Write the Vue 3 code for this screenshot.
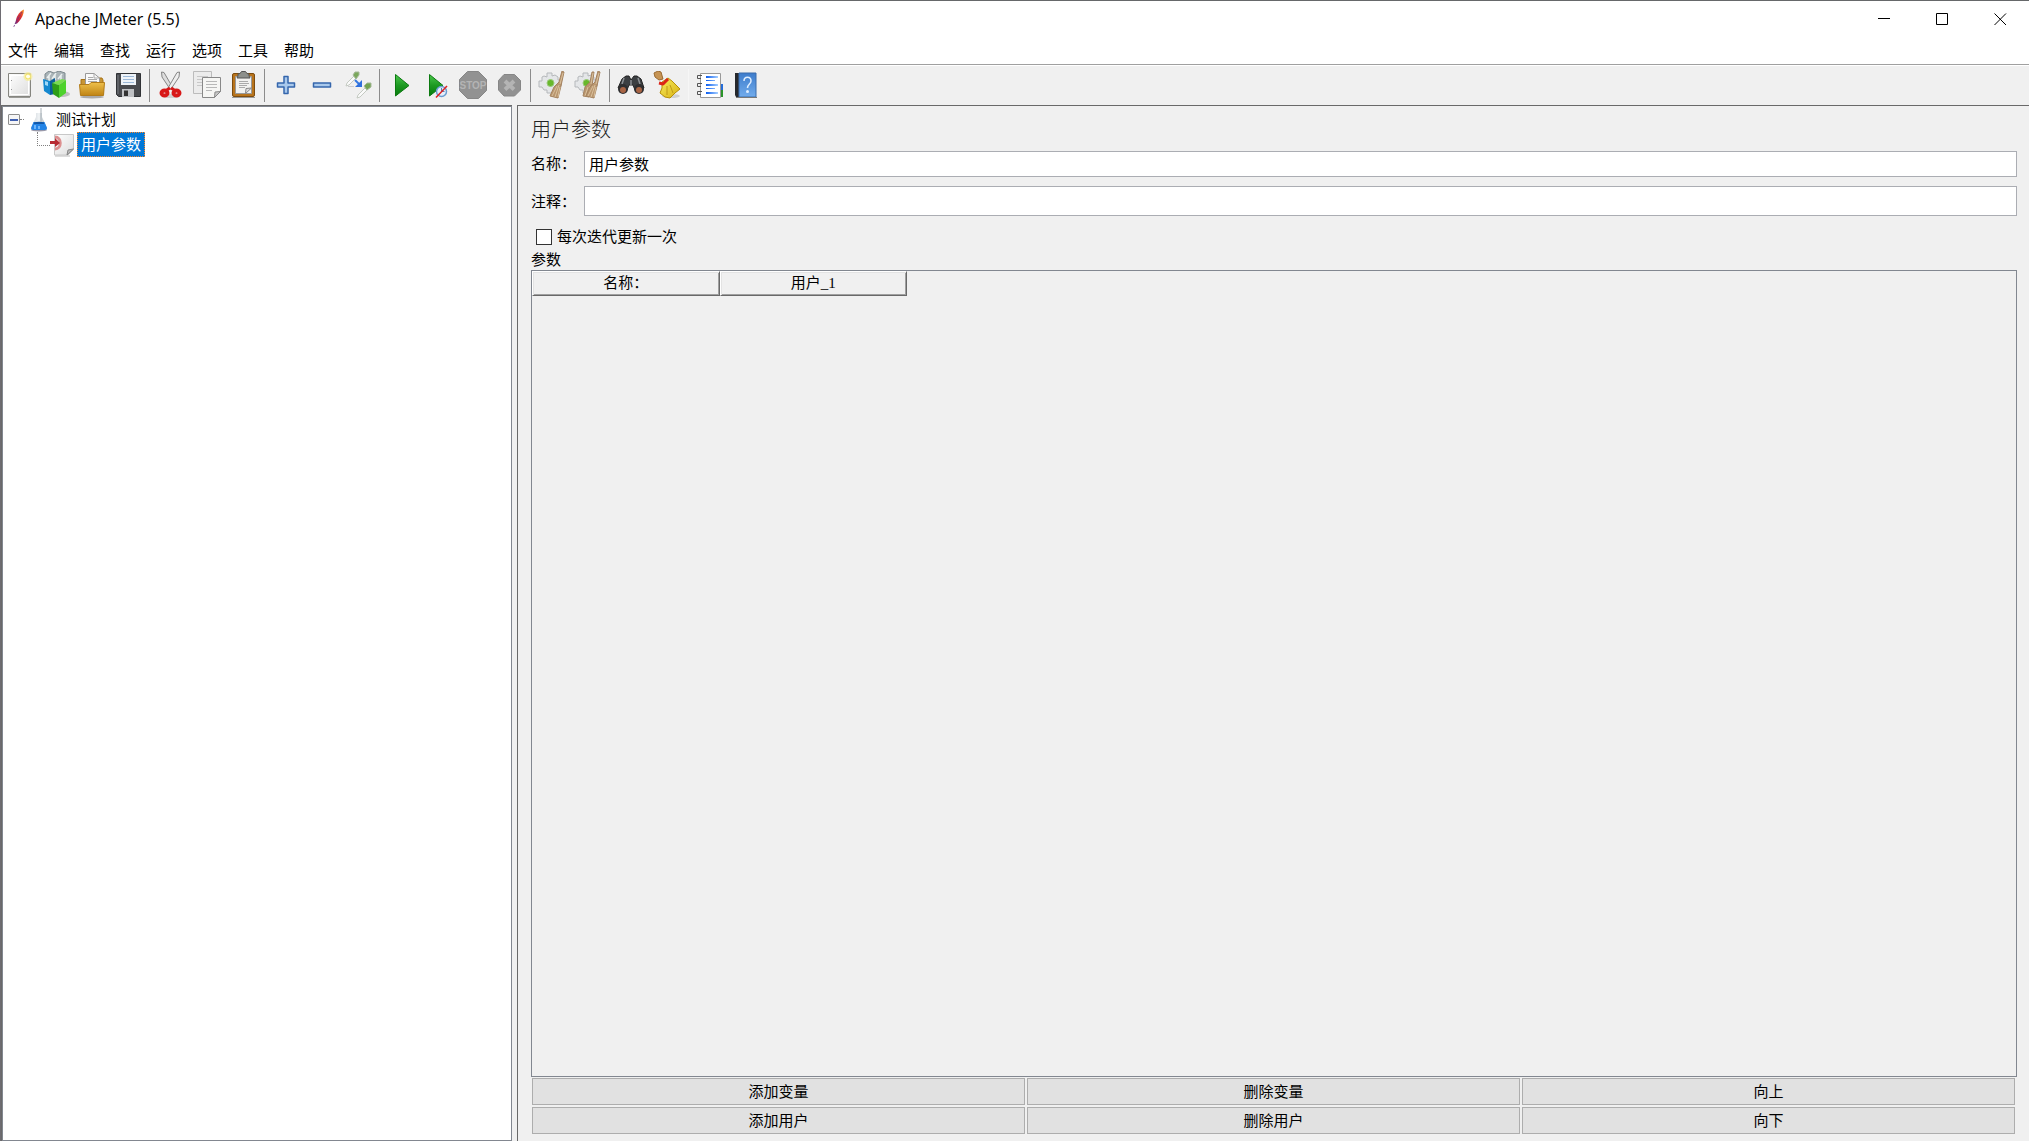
<script setup>
import { ref } from 'vue'

const menus = ['文件', '编辑', '查找', '运行', '选项', '工具', '帮助']

const toolGroups = [
  [
    { id: 'new', label: '新建' },
    { id: 'templates', label: '模板' },
    { id: 'open', label: '打开' },
    { id: 'save', label: '保存' },
  ],
  [
    { id: 'cut', label: '剪切' },
    { id: 'copy', label: '复制' },
    { id: 'paste', label: '粘贴' },
  ],
  [
    { id: 'expand', label: '展开' },
    { id: 'collapse', label: '折叠' },
    { id: 'toggle', label: '切换' },
  ],
  [
    { id: 'start', label: '启动' },
    { id: 'startNoTimers', label: '不停顿开始' },
    { id: 'stop', label: '停止' },
    { id: 'shutdown', label: '关闭' },
  ],
  [
    { id: 'clear', label: '清除' },
    { id: 'clearAll', label: '清除全部' },
  ],
  [
    { id: 'search', label: '查找' },
    { id: 'reset', label: '重置搜索' },
  ],
  [
    { id: 'functions', label: '函数助手' },
    { id: 'help', label: '帮助' },
  ],
]

const columns = ['名称：', '用户_1']
const actions = ['添加变量', '删除变量', '向上', '添加用户', '删除用户', '向下']

const name = ref('用户参数')
const comment = ref('')
const perIteration = ref(false)
</script>

<template>
  <div class="window">
    <svg class="defs" width="0" height="0" aria-hidden="true">
      <defs>
        <linearGradient id="gPaper" x1="0" y1="0" x2="1" y2="1">
          <stop offset="0" stop-color="#fff" /><stop offset="1" stop-color="#dcdcdc" />
        </linearGradient>
        <linearGradient id="gGold" x1="0" y1="0" x2="0" y2="1">
          <stop offset="0" stop-color="#eec04c" /><stop offset="1" stop-color="#c08414" />
        </linearGradient>
        <linearGradient id="gGreen" x1="0" y1="0" x2="0" y2="1">
          <stop offset="0" stop-color="#4cc84c" /><stop offset=".5" stop-color="#1d9a22" /><stop offset="1" stop-color="#067a0c" />
        </linearGradient>
        <linearGradient id="gBlue" x1="0" y1="0" x2="0" y2="1">
          <stop offset="0" stop-color="#3d7ccc" /><stop offset="1" stop-color="#72acec" />
        </linearGradient>
        <linearGradient id="gLine" x1="0" y1="0" x2="1" y2="0">
          <stop offset="0" stop-color="#0a5cf0" /><stop offset="1" stop-color="#a8d0ff" />
        </linearGradient>
        <linearGradient id="gFeather" x1="1" y1="0" x2="0" y2="1">
          <stop offset="0" stop-color="#f79a23" /><stop offset=".4" stop-color="#e0342c" /><stop offset=".75" stop-color="#b5214e" /><stop offset="1" stop-color="#5c2a80" />
        </linearGradient>
        <linearGradient id="gGlass" x1="0" y1="0" x2="1" y2="0">
          <stop offset="0" stop-color="#c4ccd2" /><stop offset=".5" stop-color="#f0f3f5" /><stop offset="1" stop-color="#9ba6ae" />
        </linearGradient>
        <linearGradient id="gBroom" x1="0" y1="0" x2="1" y2="1">
          <stop offset="0" stop-color="#f8ee60" /><stop offset="1" stop-color="#d8b010" />
        </linearGradient>
      </defs>
    </svg>

    <header class="titlebar">
      <svg width="12" height="20" viewBox="0 0 12 20" aria-hidden="true">
        <path d="M11 0.5C8 1.500 5 5 3.500 9L2 15L4 14.500C7 12 9.500 8 10.500 4Z" fill="url(#gFeather)" />
        <path d="M9 3L2.500 14L0.500 18.500" fill="none" stroke="#6b3080" stroke-width=".8" stroke-dasharray="2 1" />
      </svg>
      <h1 class="caption">Apache JMeter (5.5)</h1>
      <div class="winbuttons">
        <button type="button" aria-label="最小化"><svg width="13" height="13" viewBox="0 0 13 13"><path d="M0 5.500H12" /></svg></button>
        <button type="button" aria-label="最大化"><svg width="13" height="13" viewBox="0 0 13 13"><path d="M.5.5H11.500V11.500H.5Z" /></svg></button>
        <button type="button" aria-label="关闭"><svg width="13" height="13" viewBox="0 0 13 13"><path d="M.5.5L12 12M12 .5L.5 12" /></svg></button>
      </div>
    </header>

    <nav class="menubar">
      <button v-for="m in menus" :key="m" type="button">{{ m }}</button>
    </nav>

    <div class="toolbar" role="toolbar">
      <div v-for="(group, gi) in toolGroups" :key="gi" class="group">
        <button v-for="t in group" :key="t.id" type="button" :aria-label="t.label">
          <svg width="28" height="28" viewBox="0 0 28 28">
            <template v-if="t.id === 'new'">
              <path d="M2.500 2.500H24.500V25.500H2.500Z" fill="url(#gPaper)" stroke="#85857f" />
              <path d="M3 26.500H24" stroke="#9a9a96" />
              <path d="M4.500 4.500H22.500V23.500H4.500Z" fill="none" stroke="#fff" />
              <path d="M5 9.500h1M5 18.500h1" stroke="#999" />
              <circle cx="22" cy="5.500" r="4.500" fill="#f6ec9a" opacity=".75" />
              <circle cx="22" cy="5.500" r="2.500" fill="#fffde8" stroke="#f2e15c" />
            </template>
            <template v-else-if="t.id === 'templates'">
              <ellipse cx="20" cy="23" rx="8" ry="3" fill="#aaa" opacity=".7" />
              <path d="M3 3L7 0L12 2L17 0L23 2V14H3Z" fill="#aab4b8" stroke="#7d898e" />
              <path d="M5 7L9 2M10 8L14 2M16 8L20 3M7 10V5M13 9V4M19 9V5" stroke="#e9efef" stroke-width="1.500" />
              <path d="M1 8L8 10V24L2 20Z" fill="#1588cf" />
              <path d="M8 10L13 7V23L8 24Z" fill="#0b5f9c" />
              <path d="M3 10L6 11V15L3 14Z" fill="#9ed8f8" />
              <path d="M10 12L17 14V27L11 23Z" fill="#2e9d17" />
              <path d="M17 14L24 9V22L17 27Z" fill="#4ed22c" />
              <path d="M17 14L24 9L20 8L10 12Z" fill="#78dd50" />
            </template>
            <template v-else-if="t.id === 'open'">
              <ellipse cx="14" cy="26" rx="12" ry="1.500" fill="#aaa" />
              <path d="M3 8.500H10L12 7H24L25 9V23H3Z" fill="#c79535" stroke="#a87315" />
              <path d="M7.500 14V2.500H16L21.500 7V14Z" fill="#fafafa" stroke="#999" />
              <path d="M16 2.500V7H21" fill="none" stroke="#aaa" />
              <path d="M10 6.500h5M10 8.500h9M10 10.500h9" stroke="#aaa" />
              <path d="M1.500 13.500H11L13 11.500H26.500L25.500 24.500H2.500Z" fill="url(#gGold)" stroke="#b37c18" />
            </template>
            <template v-else-if="t.id === 'save'">
              <path d="M2.500 2.500H26.500V25.500H4.500L2.500 23.500Z" fill="#484a4e" stroke="#303236" />
              <path d="M7 3H22V14H7Z" fill="#eef3f8" />
              <path d="M9 5.500h11M9 8.500h11M9 11.500h11" stroke="#9bb8d8" />
              <path d="M8 18H20V26H8Z" fill="#bfc1c4" />
              <path d="M10 19.500H14V25H10Z" fill="#333" />
              <path d="M4 4v19" stroke="#777a80" />
            </template>
            <template v-else-if="t.id === 'cut'">
              <ellipse cx="14" cy="25" rx="9" ry="2" fill="#d0d0d0" />
              <path d="M4.500 1L7 1.500L16 17L13 18L5 6Z" fill="#ddd" stroke="#858585" />
              <path d="M22.500 1L20 1.500L11 17L14 18L22 6Z" fill="#eee" stroke="#858585" />
              <ellipse cx="7.500" cy="22" rx="3" ry="2.500" fill="none" stroke="#d81818" stroke-width="4" />
              <ellipse cx="19.500" cy="22" rx="3" ry="2.500" fill="none" stroke="#d81818" stroke-width="4" />
              <path d="M9 19.500L13 17M18 19.500L14 17" stroke="#d81818" stroke-width="3" />
            </template>
            <template v-else-if="t.id === 'copy'">
              <path d="M.5.5H18.500V22.500H.5Z" fill="#ececec" stroke="#bcbcbc" />
              <path d="M4 5.500h11M4 8.500h6M4 11.500h5M4 14.500h5" stroke="#c8c8c8" />
              <path d="M9.500 6.500H27.500V20.500L21.500 26.500H9.500Z" fill="#f6f6f4" stroke="#888" />
              <path d="M13 10.500h11M13 13.500h11M13 16.500h11M13 19.500h6" stroke="#b8b8b8" />
              <path d="M21.500 26.500L22 21L27.500 20.500Z" fill="#c8c8c8" stroke="#888" />
            </template>
            <template v-else-if="t.id === 'paste'">
              <path d="M3 26.500H26" stroke="#999" />
              <rect x="3.500" y="2.500" width="22" height="23" rx="1.500" fill="#b8741c" stroke="#7c4c10" />
              <path d="M6.500 5.500H22.500V22.500H6.500Z" fill="#f2f2f0" stroke="#999" />
              <path d="M9 5V3L11 2.500L12.500.5H16.500L18 2.500L20 3V5L21 7H8Z" fill="#8d908c" stroke="#555" />
              <path d="M10 10.500h9M10 12.500h10M10 14.500h8M10 16.500h6" stroke="#aaa" />
              <path d="M16.500 22.500L17 17.500L22.500 17Z" fill="#ddd" stroke="#888" />
            </template>
            <template v-else-if="t.id === 'expand'">
              <path d="M12 5.500H16V12H22.500V16H16V22.500H12V16H5.500V12H12Z" fill="#a9c9ec" stroke="#3566ac" stroke-width="1.500" />
            </template>
            <template v-else-if="t.id === 'collapse'">
              <path d="M5.500 12H22.500V16H5.500Z" fill="#a9c9ec" stroke="#3566ac" stroke-width="1.500" />
            </template>
            <template v-else-if="t.id === 'toggle'">
              <path d="M10 5L3 12L2 15L5 14L12 7Z" fill="#fafafa" stroke="#c4cac2" />
              <path d="M9 4L11 1L15 1V4L12 8Z" fill="#7aa85c" stroke="#a5b898" />
              <path d="M21 17L14 24L13 27L16 26L23 19Z" fill="#fafafa" stroke="#c4cac2" />
              <path d="M20 15L23 12L27 12V16L23 19Z" fill="#72a450" stroke="#a5b898" />
              <path d="M11 9L15 13" stroke="#3578e0" stroke-width="2" />
              <path d="M18 9V16H11Z" fill="#2f70dd" />
              <path d="M4 15.500H10" stroke="#ccc" />
            </template>
            <template v-else-if="t.id === 'start'">
              <path d="M8.500 3.500V25L22 14.500Z" fill="url(#gGreen)" stroke="#0b7a10" />
            </template>
            <template v-else-if="t.id === 'startNoTimers'">
              <path d="M6.500 3.500V25L20 14.500Z" fill="url(#gGreen)" stroke="#0b7a10" />
              <circle cx="18.500" cy="20.500" r="5" fill="#e4eefa" stroke="#6b9cd0" stroke-width="1.500" />
              <path d="M18.500 17v3.500h3" fill="none" stroke="#557fb0" />
              <path d="M13 26.500L24 15" stroke="#e02020" stroke-width="1.500" />
            </template>
            <template v-else-if="t.id === 'stop'">
              <path d="M8.500.5H19.500L27.500 8.500V19.500L19.500 27.500H8.500L.5 19.500V8.500Z" fill="#929292" stroke="#868686" />
              <text x="14" y="18" text-anchor="middle" class="stoptext">STOP</text>
            </template>
            <template v-else-if="t.id === 'shutdown'">
              <path d="M9 3.500H19.500L25.500 9.500V19L19.500 25H9L3.500 19V9.500Z" fill="#929292" stroke="#868686" />
              <path d="M10 10L19 18.500M19 10L10 18.500" stroke="#b4b4b4" stroke-width="4" />
            </template>
            <template v-else-if="t.id === 'clear' || t.id === 'clearAll'">
              <path d="M9 2H14V5L17 4L20 6V9H23V15H20V19L16 20L14 22H9V19H6L4 16H1V10H4V6L6 5L9 6Z" fill="#e4e6e8" stroke="#b5b8bb" />
              <circle cx="12.500" cy="12" r="3.500" fill="#68b82c" stroke="#9bc97c" />
              <path v-if="t.id === 'clearAll'" d="M18 1L16 11L11 16L9 25L15 26L18 15L20 1Z" fill="#b9966f" stroke="#a58360" />
              <path v-if="t.id === 'clearAll'" d="M14 16L11 25M16 15L14 25M19 2L17 13" stroke="#d9c09c" />
              <path d="M24 0L21 11L16 16L12 25L20 27L23 15L26 1Z" fill="#b9966f" stroke="#a58360" />
              <path d="M19 15L14 25M21 14L17 26M22 16L20 26M25 2L22 13" stroke="#d9c09c" />
            </template>
            <template v-else-if="t.id === 'search'">
              <path d="M5 8L9 5H12L14 9L17 5H20L24 8L27 17L18 19L16 14H12L10 19L1 17Z" fill="#3c3f42" stroke="#222" />
              <path d="M7 7L5 13M21 7L23 13M14 9v5" stroke="#8c9094" stroke-width="1.500" />
              <circle cx="6" cy="18" r="5" fill="#2e2e30" />
              <circle cx="22" cy="18" r="5" fill="#2e2e30" />
              <circle cx="6" cy="19" r="3" fill="#a86444" />
              <circle cx="22" cy="19" r="3" fill="#a86444" />
            </template>
            <template v-else-if="t.id === 'reset'">
              <ellipse cx="18" cy="25" rx="9" ry="2" fill="#cfcfcf" />
              <path d="M1 2L5 0L8 1L10 8L6 9L2 6Z" fill="#c69454" stroke="#9a6a30" />
              <path d="M9 11L15 7L19 10L27 18L22 22L17 27L12 26L7 22L9 17Z" fill="url(#gBroom)" stroke="#b79008" />
              <path d="M14 15L14 24M17 14L20 22" stroke="#c09a18" />
              <path d="M6 12L10 13L15 8" fill="none" stroke="#dc2418" stroke-width="3" />
            </template>
            <template v-else-if="t.id === 'functions'">
              <path d="M22 19H27V26H20Z" fill="#2a9428" />
              <path d="M22 13H27V19H22Z" fill="#246cd8" />
              <path d="M4.500 2.500H24.500V26.500H4.500Z" fill="#fff" stroke="#999" />
              <path d="M10 5H22V7H10ZM10 9H19V10H10ZM10 13H22V15H10ZM10 17H19V18H10ZM10 21H22V23H10Z" fill="url(#gLine)" />
              <path d="M6 4.500H1.500V7.500H5M6 12.500H1.500V15.500H5M6 20.500H1.500V23.500H5" fill="none" stroke="#555" />
            </template>
            <template v-else>
              <path d="M3 2H7V26H4L3 24Z" fill="#26282c" />
              <path d="M7 2H24V26H7Z" fill="url(#gBlue)" stroke="#3a6cac" />
              <path d="M4 26.500H25" stroke="#777" />
              <path d="M12 10C12 5 19 5 19 10C19 13 15.500 13 15.500 17" fill="none" stroke="#dfeeff" stroke-width="1.500" />
              <circle cx="15.500" cy="20.500" r="1.500" fill="#dfeeff" />
            </template>
          </svg>
        </button>
      </div>
    </div>

    <main class="split">
      <aside class="tree">
        <div class="row root">
          <button type="button" class="expander" aria-label="折叠节点"></button>
          <span class="stub"></span>
          <svg width="18" height="24" viewBox="0 0 18 24" aria-hidden="true">
            <ellipse cx="9" cy="22" rx="8" ry="1.500" fill="#99a" />
            <path d="M6 5H12V9L17 20Q17 22 15 22H3Q1 22 1 20L6 9Z" fill="url(#gGlass)" />
            <path d="M3.500 14H14.500L17 20Q17 22 15 22H3Q1 22 1 20Z" fill="#2484e6" />
            <path d="M4 14.500Q9 13 14 14.500L14 16H4Z" fill="#1258a8" />
            <path d="M5 17V21M9 18V21" stroke="#6cb4fa" stroke-width="2" />
            <path d="M11 0V14" stroke="#a4adb3" />
          </svg>
          <span class="node">测试计划</span>
        </div>
        <div class="row child">
          <span class="elbow"></span>
          <svg width="25" height="24" viewBox="0 0 25 24" aria-hidden="true">
            <path d="M5 23H20" stroke="#bbb" />
            <path d="M4.500 1.500H23.500V16.500L18 22H4.500Z" fill="url(#gPaper)" stroke="#c8c8c8" />
            <path d="M17 22L18 17L23.500 16Z" fill="#bbb" stroke="#888" />
            <path d="M5 4C12 4 12 16 5 16" fill="none" stroke="#dc9090" stroke-width="3" />
            <path d="M0 8H5V5L10 10L5 14V11H0Z" fill="#b82c34" />
          </svg>
          <span class="node selected">用户参数</span>
        </div>
      </aside>

      <section class="pane">
        <h2>用户参数</h2>
        <div class="field name">
          <label for="name">名称：</label>
          <input id="name" v-model="name" type="text" />
        </div>
        <div class="field comment">
          <label for="comment">注释：</label>
          <input id="comment" v-model="comment" type="text" />
        </div>
        <label class="check">
          <input v-model="perIteration" type="checkbox" />
          <span>每次迭代更新一次</span>
        </label>
        <div id="params" class="tabletitle">参数</div>
        <div class="scroll">
          <table aria-labelledby="params">
            <thead>
              <tr><th v-for="c in columns" :key="c" scope="col">{{ c }}</th></tr>
            </thead>
            <tbody></tbody>
          </table>
        </div>
        <div class="actions">
          <button v-for="a in actions" :key="a" type="button">{{ a }}</button>
        </div>
      </section>
    </main>
  </div>
</template>

<style>
body {
  margin: 0;
  background: #f0f0f0;
}
</style>

<style scoped>
* {
  box-sizing: border-box;
}
.window {
  display: flex;
  flex-direction: column;
  min-height: 100vh;
  border-top: 1px solid #66686a;
  border-left: 1px solid #6e6c72;
  background: #f0f0f0;
  color: #000;
  font-family: "Noto Sans CJK SC", sans-serif;
  font-size: 15px;
  line-height: 20px;
}
.defs {
  position: absolute;
}
button {
  margin: 0;
  padding: 0;
  border: 0;
  background: none;
  color: inherit;
  font: inherit;
}

.titlebar {
  display: flex;
  align-items: center;
  height: 36px;
  padding-left: 12px;
  background: #fff;
}
.caption {
  flex: 1;
  margin: 0 0 0 10px;
  font: 400 16px/20px "Open Sans", "Noto Sans", sans-serif;
}
.winbuttons {
  display: flex;
}
.winbuttons button {
  display: flex;
  align-items: center;
  justify-content: center;
  width: 58px;
  height: 36px;
}
.winbuttons path {
  fill: none;
  stroke: #000;
}

.menubar {
  display: flex;
  gap: 16px;
  height: 28px;
  padding: 0 7px 2px;
  border-bottom: 1px solid #a0a0a0;
  background: #fff;
}

.toolbar {
  display: flex;
  height: 40px;
  padding-left: 1px;
  border-top: 1px solid #fff;
}
.group {
  display: flex;
}
.group + .group::before {
  content: "";
  width: 1px;
  height: 33px;
  margin: 3px 3px 0;
  background: #8c8c8c;
}
.group:last-child::before {
  background: #f6f6f6;
}
.group button {
  display: flex;
  align-items: center;
  justify-content: center;
  width: 36px;
  height: 38px;
}
.group path,
.group circle,
.group ellipse {
  stroke-linejoin: round;
}
.stoptext {
  fill: #b4b4b4;
  font: 700 10px "Liberation Sans", sans-serif;
}

.split {
  display: flex;
  flex: 1;
  gap: 5px;
}
.tree {
  position: relative;
  flex: 0 0 510px;
  margin: 1px 0 0 1px;
  border: 1px solid #828790;
  background: #fff;
}
.tree::before {
  content: "";
  position: absolute;
  inset: -2px -1px -1px -2px;
  border: solid #696969;
  border-width: 1px 0 0 1px;
  pointer-events: none;
}
.row {
  display: flex;
  align-items: center;
  height: 25px;
}
.root {
  padding-left: 5px;
}
.expander {
  display: flex;
  align-items: center;
  justify-content: center;
  width: 12px;
  height: 11px;
  border: 1px solid #8e8e8e;
  border-radius: 1px;
  background: #f6f6f6;
}
.expander::before {
  content: "";
  width: 8px;
  height: 2px;
  background: #3f5fb0;
}
.stub {
  width: 4px;
  margin-right: 6px;
  border-top: 1px dotted #808080;
}
.node {
  padding-bottom: 2px;
}
.root .node {
  margin-left: 8px;
}
.child {
  padding-left: 34px;
}
.elbow {
  align-self: flex-start;
  width: 13px;
  height: 14px;
  border: dotted #808080;
  border-width: 0 0 1px 1px;
}
.selected {
  height: 25px;
  margin-left: 2px;
  padding: 1px 3px;
  border: 1px dotted #ff8728;
  background: #0078d7;
  color: #fff;
}

.pane {
  display: flex;
  flex: 1;
  flex-direction: column;
  min-width: 0;
  padding: 9px 12px 7px 13px;
  border: solid #696969;
  border-width: 1px 0 0 1px;
}
h2 {
  margin: 0 0 8px;
  color: #222;
  font-size: 20px;
  font-weight: 300;
  line-height: 28px;
}
.field {
  display: flex;
  align-items: center;
}
.field label {
  width: 53px;
  white-space: nowrap;
}
.field input {
  flex: 1;
  min-width: 0;
  height: 26px;
  padding: 0 4px 2px;
  border: 1px solid #abadb3;
  background: #fff;
  color: #000;
  font: inherit;
}
.name label {
  padding-bottom: 2px;
}
.comment {
  margin-top: 9px;
}
.comment input {
  height: 30px;
}
.check {
  display: flex;
  align-items: center;
  gap: 5px;
  align-self: flex-start;
  margin-top: 11px;
}
.check input {
  width: 16px;
  height: 16px;
  margin: 0 0 0 5px;
  border: 1px solid #333;
  background: #fff;
  appearance: none;
}
.check span {
  padding-bottom: 2px;
  line-height: 18px;
}
.tabletitle {
  margin: 2px 0 1px;
}
.scroll {
  flex: 1;
  border: 1px solid #828790;
}
table {
  border-spacing: 0;
  table-layout: fixed;
  width: 375px;
}
th {
  height: 25px;
  padding: 0 0 2px;
  border: 1px solid;
  border-color: #fff #696969 #696969 #fff;
  box-shadow: inset 1px 1px #e3e3e3, inset -1px -1px #a0a0a0;
  font-family: "Liberation Serif", "Noto Sans CJK SC", serif;
  font-weight: 400;
}
.actions {
  display: grid;
  grid-template-columns: repeat(3, 1fr);
  gap: 2px;
  margin-top: 1px;
  padding: 0 2px 0 1px;
}
.actions button {
  height: 27px;
  padding-bottom: 2px;
  border: 1px solid #adadad;
  background: #e1e1e1;
}
</style>
